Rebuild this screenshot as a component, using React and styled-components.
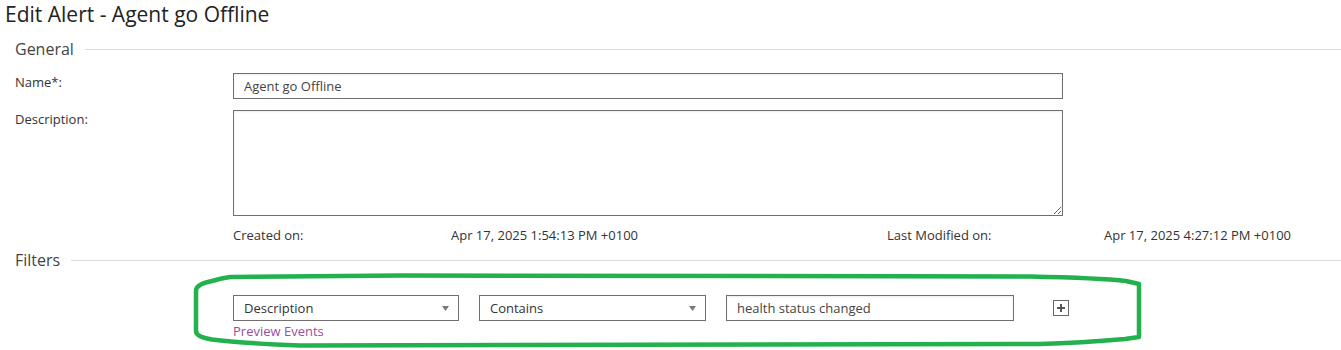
import React from "react";
import styled, { createGlobalStyle } from "styled-components";

const GlobalStyle = createGlobalStyle`
  body {
    margin: 0;
    background: #fff;
    font-family: "Open Sans", "Liberation Sans", sans-serif;
    color: #333;
  }
`;

const Page = styled.div`
  width: 1341px;
  height: 350px;
  overflow: hidden;
`;

const Title = styled.h1`
  margin: 0;
  padding-left: 5px;
  font-size: 21px;
  font-weight: 400;
  line-height: 28px;
  color: #222;
`;

const Section = styled.div`
  padding-left: 15px;
  margin-top: ${(props) => props.top || 0}px;
`;

const SectionHeader = styled.div`
  display: flex;
  align-items: center;
  gap: 11px;
  font-size: 16px;
  line-height: 22px;
  color: #444;
  &::after {
    content: "";
    flex: 1;
    height: 1px;
    background: #dcdcdc;
  }
`;

const FieldRow = styled.div`
  display: grid;
  grid-template-columns: 218px 830px;
  margin-top: ${(props) => props.top}px;
`;

const Label = styled.label`
  font-size: 13px;
  line-height: 18px;
  color: #333;
`;

const TextInput = styled.input`
  box-sizing: border-box;
  width: ${(props) => props.w || 830}px;
  height: 26px;
  margin: 0;
  padding: 0 10px;
  border: 1px solid #707070;
  border-radius: 0;
  box-shadow: inset 0 1px 2px rgba(0, 0, 0, 0.08);
  font-family: inherit;
  font-size: 13px;
  color: #444;
  outline: none;
`;

const TextArea = styled.textarea`
  box-sizing: border-box;
  width: 830px;
  height: 106px;
  margin: 0;
  padding: 6px 10px;
  border: 1px solid #707070;
  border-radius: 0;
  box-shadow: inset 0 1px 2px rgba(0, 0, 0, 0.08);
  font-family: inherit;
  font-size: 13px;
  display: block;
  outline: none;
`;

const DateRow = styled.div`
  display: grid;
  grid-template-columns: 218px 436px 217px auto;
  margin: 10px 0 0 218px;
  font-size: 13px;
  line-height: 18px;
  color: #333;
`;

const FilterArea = styled.div`
  position: relative;
  padding: 24px 0 0 218px;
`;

const FilterRow = styled.div`
  display: flex;
  align-items: center;
`;

const Select = styled.div`
  box-sizing: border-box;
  display: flex;
  align-items: center;
  justify-content: space-between;
  width: ${(props) => props.w}px;
  height: 26px;
  margin-right: ${(props) => props.gap}px;
  padding: 0 9px 0 10px;
  border: 1px solid #707070;
  font-size: 13px;
  color: #333;
`;

const Caret = styled.svg`
  width: 7px;
  height: 5px;
  fill: #7a7a7a;
`;

const AddButton = styled.button`
  box-sizing: border-box;
  width: 16px;
  height: 16px;
  margin-left: 39px;
  padding: 0;
  display: flex;
  align-items: center;
  justify-content: center;
  background: #fff;
  border: 1px solid #6a6a6a;
  cursor: pointer;
`;

const PreviewLink = styled.a`
  display: block;
  width: fit-content;
  margin-top: 1px;
  font-size: 13px;
  line-height: 18px;
  color: #9a4f98;
  text-decoration: none;
`;

const Outline = styled.svg`
  position: absolute;
  left: 0;
  top: 0;
  width: 1200px;
  height: 80px;
  overflow: visible;
  pointer-events: none;
`;

const SelectBox = ({ value, w, gap }) => (
  <Select w={w} gap={gap}>
    <span>{value}</span>
    <Caret viewBox="0 0 7 5">
      <path d="M0 0h7L3.5 5z" />
    </Caret>
  </Select>
);

export default function App() {
  return (
    <Page>
      <GlobalStyle />
      <Title>Edit Alert - Agent go Offline</Title>

      <Section top={10}>
        <SectionHeader>General</SectionHeader>
        <FieldRow top={13}>
          <Label>Name*:</Label>
          <TextInput defaultValue="Agent go Offline" />
        </FieldRow>
        <FieldRow top={11}>
          <Label>Description:</Label>
          <TextArea />
        </FieldRow>
        <DateRow>
          <span>Created on:</span>
          <span>Apr 17, 2025 1:54:13 PM +0100</span>
          <span>Last Modified on:</span>
          <span>Apr 17, 2025 4:27:12 PM +0100</span>
        </DateRow>
      </Section>

      <Section top={5}>
        <SectionHeader>Filters</SectionHeader>
        <FilterArea>
          <FilterRow>
            <SelectBox value="Description" w={226} gap={20} />
            <SelectBox value="Contains" w={227} gap={20} />
            <TextInput w={288} defaultValue="health status changed" />
            <AddButton aria-label="Add filter">
              <svg width="10" height="10" viewBox="0 0 10 10">
                <path d="M4 1h2v3h3v2H6v3H4V6H1V4h3z" fill="#555" />
              </svg>
            </AddButton>
          </FilterRow>
          <PreviewLink href="#">Preview Events</PreviewLink>
          <Outline viewBox="0 0 1200 80">
            <path
              d="M215 6 L385 4.5 L1015 5.5 Q1085 7 1111 10 L1124 13 L1124 66 L1110 68 Q1065 72 1025 73 L285 74.5 Q225 72 197 68.5 Q181 66 181 60 L181 20 Q181 13 197 10 Q207 7 215 6 Z"
              fill="none"
              stroke="#22b14c"
              strokeWidth="4.5"
              strokeLinejoin="round"
            />
          </Outline>
        </FilterArea>
      </Section>
    </Page>
  );
}
